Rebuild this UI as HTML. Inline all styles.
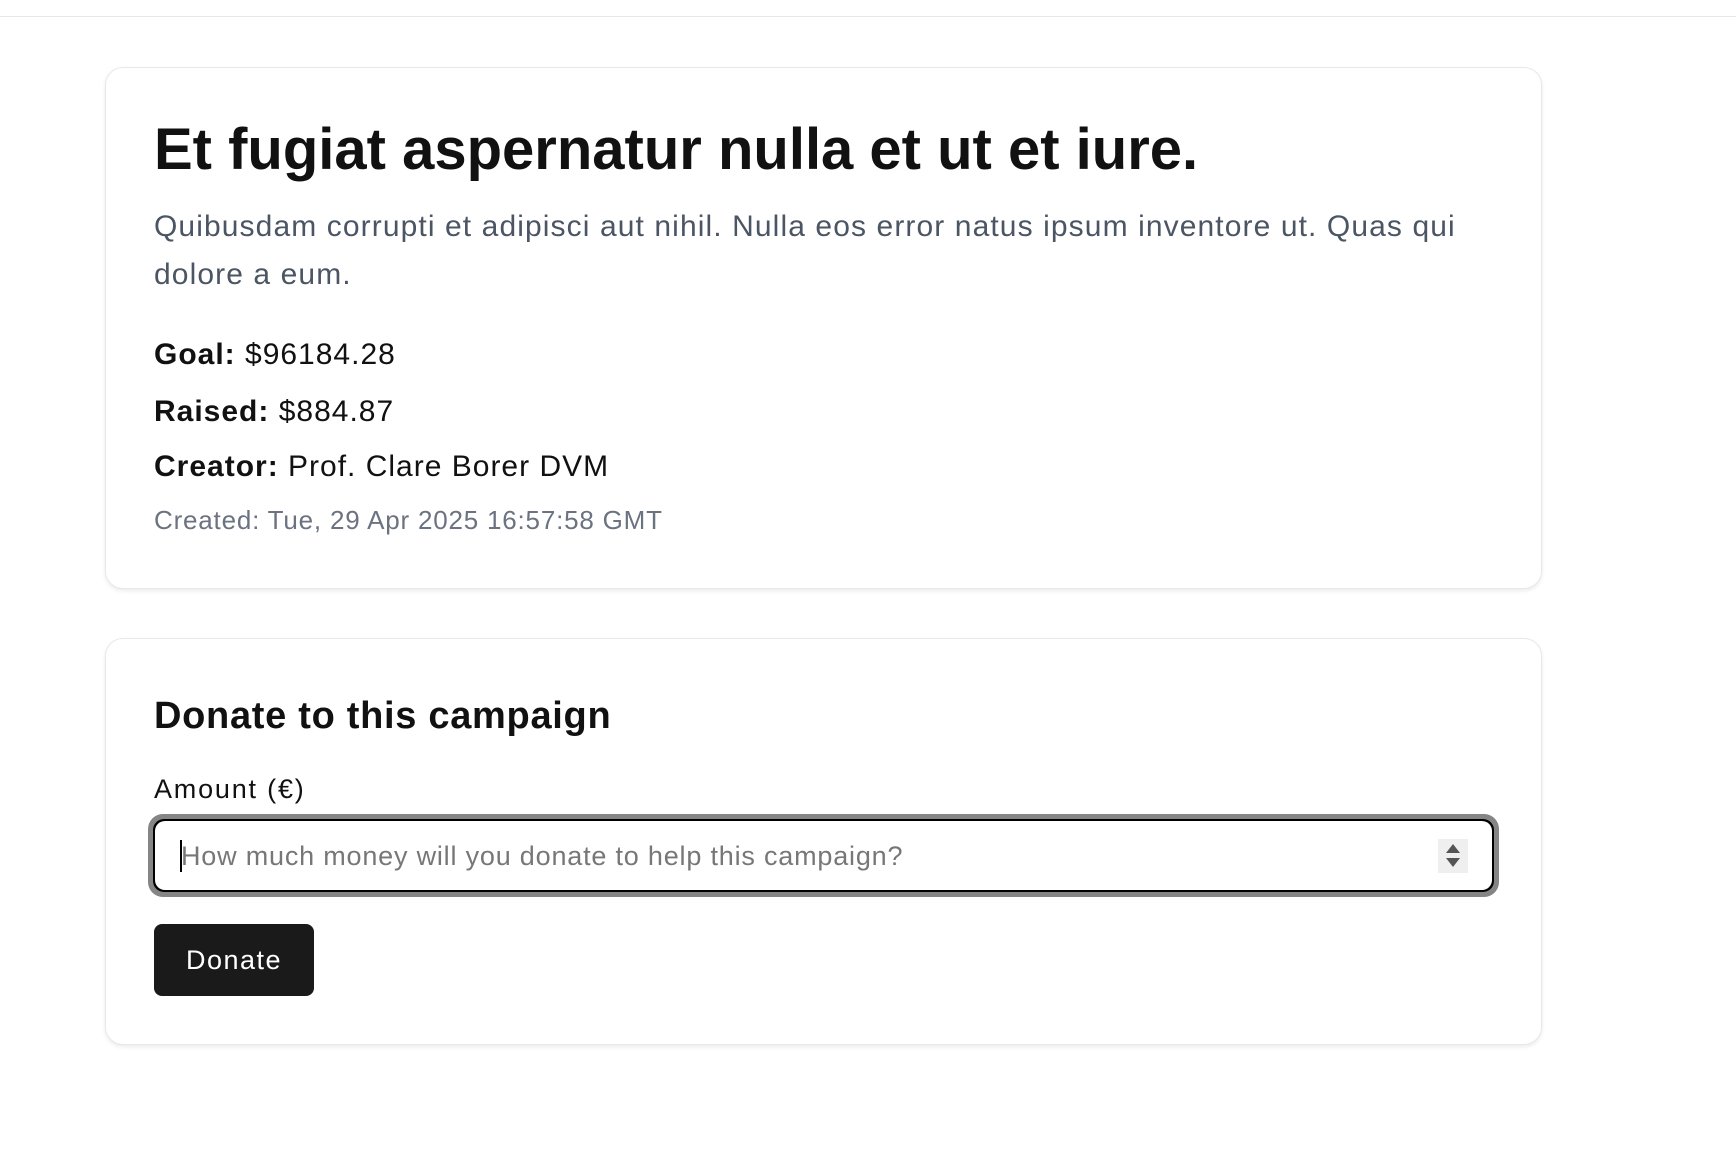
<!DOCTYPE html>
<html><head><meta charset="utf-8"><style>
html,body{margin:0;padding:0;background:#fff;}
body{width:1736px;height:1164px;position:relative;font-family:"Liberation Sans",sans-serif;color:#111;overflow:hidden;}
.topline{position:absolute;left:0;top:16px;width:1736px;height:1px;background:#e5e7eb;}
.card{position:absolute;left:105px;width:1437px;background:#fff;border:1px solid #e8e8e8;border-radius:18px;box-shadow:0 2px 4px rgba(0,0,0,0.08);box-sizing:border-box;}
.t{position:absolute;left:154px;white-space:nowrap;line-height:1;}
</style></head><body>
<div class="topline"></div>
<div class="card" style="top:67px;height:522px;"></div>
<div class="t" style="top:121px;font-size:58px;font-weight:bold;letter-spacing:0px;">Et fugiat aspernatur nulla et ut et iure.</div>
<div class="t" style="top:212px;font-size:30px;color:#4b5563;letter-spacing:1.1px;">Quibusdam corrupti et adipisci aut nihil. Nulla eos error natus ipsum inventore ut. Quas qui</div>
<div class="t" style="top:260px;font-size:30px;color:#4b5563;letter-spacing:1.1px;">dolore a eum.</div>
<div class="t" style="top:340px;font-size:30px;letter-spacing:1px;"><b>Goal:</b> $96184.28</div>
<div class="t" style="top:397px;font-size:30px;letter-spacing:1px;"><b>Raised:</b> $884.87</div>
<div class="t" style="top:452px;font-size:30px;letter-spacing:1px;"><b>Creator:</b> Prof. Clare Borer DVM</div>
<div class="t" style="top:507px;font-size:26px;color:#6b7280;letter-spacing:0.8px;">Created: Tue, 29 Apr 2025 16:57:58 GMT</div>

<div class="card" style="top:638px;height:407px;"></div>
<div class="t" style="top:697px;font-size:38px;font-weight:bold;letter-spacing:0.7px;">Donate to this campaign</div>
<div class="t" style="top:776px;font-size:27px;letter-spacing:1.8px;">Amount (€)</div>
<div style="position:absolute;left:148px;top:814px;width:1351px;height:83px;background:#858585;border-radius:15px;"></div>
<div style="position:absolute;left:153px;top:819px;width:1341px;height:73px;background:#000;border-radius:11px;"></div>
<div style="position:absolute;left:155px;top:821px;width:1337px;height:69px;background:#fff;border-radius:10px;"></div>
<div style="position:absolute;left:180px;top:840px;width:2px;height:32px;background:#000;"></div>
<div class="t" style="left:181px;top:843px;font-size:27px;color:#777;letter-spacing:0.8px;">How much money will you donate to help this campaign?</div>
<div style="position:absolute;left:1438px;top:839px;width:30px;height:34px;background:#efefef;"></div>
<div style="position:absolute;left:1446px;top:844px;width:0;height:0;border-left:7px solid transparent;border-right:7px solid transparent;border-bottom:9px solid #555;"></div>
<div style="position:absolute;left:1446px;top:858px;width:0;height:0;border-left:7px solid transparent;border-right:7px solid transparent;border-top:9px solid #555;"></div>
<div style="position:absolute;left:154px;top:924px;width:160px;height:72px;background:#1a1a1a;border-radius:8px;color:#fff;font-size:27px;line-height:72px;text-align:center;letter-spacing:1.5px;">Donate</div>
</body></html>
